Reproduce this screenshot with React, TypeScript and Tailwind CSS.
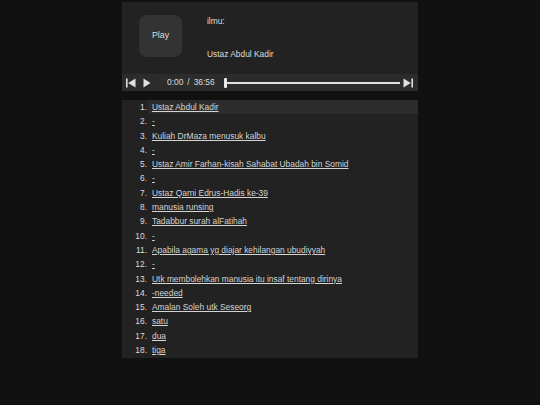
import React from 'react';

const tracks = [
  'Ustaz Abdul Kadir',
  '-',
  'Kuliah DrMaza menusuk kalbu',
  '-',
  'Ustaz Amir Farhan-kisah Sahabat Ubadah bin Somid',
  '-',
  'Ustaz Qarni Edrus-Hadis ke-39',
  'manusia runsing',
  'Tadabbur surah alFatihah',
  '-',
  'Apabila agama yg diajar kehilangan ubudiyyah',
  '-',
  'Utk membolehkan manusia itu insaf tentang dirinya',
  '-needed',
  'Amalan Soleh utk Seseorg',
  'satu',
  'dua',
  'tiga',
];

const PrevIcon = () => (
  <svg width="10" height="10" viewBox="0 0 10 10" className="fill-[#e0e0e0]">
    <rect x="0" y="0.5" width="1.6" height="9" />
    <polygon points="9.5,0.5 9.5,9.5 2.2,5" />
  </svg>
);

const NextIcon = () => (
  <svg width="10" height="10" viewBox="0 0 10 10" className="fill-[#e0e0e0]">
    <polygon points="0.5,0.5 0.5,9.5 7.8,5" />
    <rect x="8.4" y="0.5" width="1.6" height="9" />
  </svg>
);

const PlayIcon = () => (
  <svg width="8" height="10" viewBox="0 0 8 10" className="fill-[#e0e0e0]">
    <polygon points="0.5,0.5 0.5,9.5 7.5,5" />
  </svg>
);

export default function App() {
  return (
    <div className="min-h-[405px] bg-[#111111] pt-[2px] font-[Liberation_Sans,Arial,sans-serif] text-[8.4px] text-[#dcdcdc]">
      <div className="mx-auto w-[296px]">
        {/* Player */}
        <div className="bg-[#222222]">
          <div className="flex h-[72px] items-start">
            <div className="ml-[17px] mt-[13px] flex h-[42px] w-[43px] items-center justify-center rounded-[8px] bg-[#333333] text-[8.8px]">
              Play
            </div>
            <div className="ml-[25px] flex flex-col">
              <div className="mt-[12px] leading-[14px]">ilmu:</div>
              <div className="mt-[19px] leading-[14px]">Ustaz Abdul Kadir</div>
            </div>
          </div>
          <div className="flex h-[17px] items-center bg-[#2c2c2c] pl-[4px] pr-[5px]">
            <PrevIcon />
            <div className="ml-[7px]">
              <PlayIcon />
            </div>
            <div className="ml-[16px] flex items-center">
              <span>0:00</span>
              <span className="mx-[4px]">/</span>
              <span>36:56</span>
            </div>
            <div className="relative ml-[9px] flex h-[10px] flex-1 items-center">
              <div className="h-[2px] w-full bg-[#e0e0e0]" />
              <div className="absolute left-0 top-0 h-[10px] w-[3px] rounded-[1px] bg-[#e8e8e8]" />
            </div>
            <div className="ml-[3px]">
              <NextIcon />
            </div>
          </div>
        </div>

        {/* Playlist */}
        <div className="mt-[9px] bg-[#222222] pb-[1px]">
          {tracks.map((t, i) => (
            <div key={i} className="flex h-[14.3px] items-center leading-[14.3px]">
              <div className="w-[25px] text-right">{i + 1}.</div>
              <div
                className={
                  'ml-[1px] flex-1 pl-[4px] ' + (i === 0 ? 'bg-[#2c2c2c]' : '')
                }
              >
                <a className="text-[#d4d4d4] underline underline-offset-[1px]">{t}</a>
              </div>
            </div>
          ))}
        </div>
      </div>
    </div>
  );
}
